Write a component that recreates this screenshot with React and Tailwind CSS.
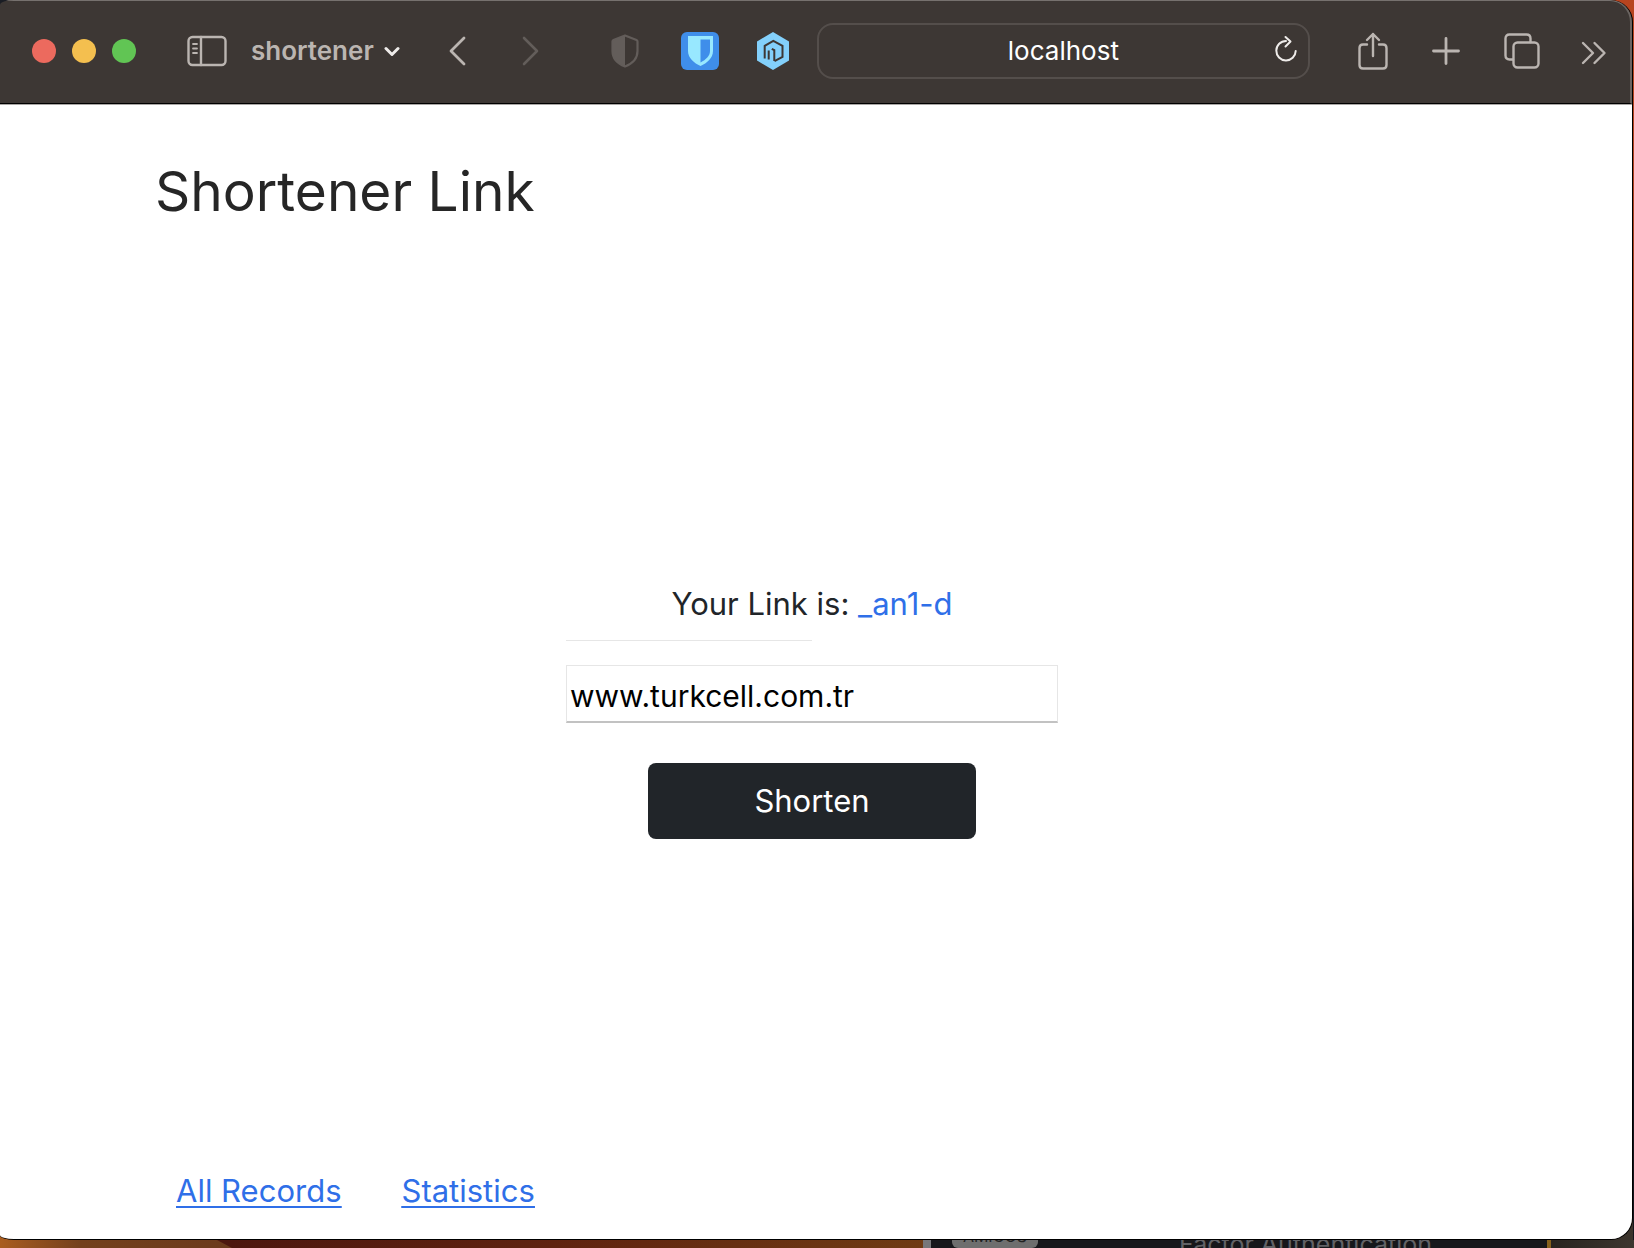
import React from "react";

const stroke = { fill: "none", stroke: "currentColor", strokeLinecap: "round", strokeLinejoin: "round" };

function IconButton({ label, className, children }) {
  return (
    <button type="button" aria-label={label} className={`flex shrink-0 items-center justify-center ${className}`}>
      {children}
    </button>
  );
}

function Toolbar() {
  return (
    <header className="flex h-[102px] items-center pb-[3px] pl-8 pr-[22px] text-[#bbb5b1]">
      <div className="flex shrink-0 gap-4">
        <button type="button" aria-label="Close" className="size-6 rounded-full bg-[#ec6a5e]" />
        <button type="button" aria-label="Minimize" className="size-6 rounded-full bg-[#f4bf4f]" />
        <button type="button" aria-label="Zoom" className="size-6 rounded-full bg-[#61c554]" />
      </div>

      <IconButton label="Show sidebar" className="ml-[51px]">
        <svg width="40" height="32" viewBox="0 0 40 32" {...stroke} strokeWidth="2.4">
          <rect x="1.5" y="2" width="37" height="28" rx="4" />
          <path d="M14 2v28" />
          <path d="M6 9h4M6 13.500h4M6 18h4" strokeWidth="1.800" />
        </svg>
      </IconButton>

      <button type="button" className="ml-6 flex shrink-0 items-center gap-2.5 text-[26px] font-semibold leading-8">
        shortener
        <svg width="16" height="12" viewBox="0 0 16 12" {...stroke} strokeWidth="3" className="text-[#efecea]">
          <path d="M2 3.500l6 6 6-6" />
        </svg>
      </button>

      <IconButton label="Back" className="ml-12">
        <svg width="20" height="32" viewBox="0 0 20 32" {...stroke} strokeWidth="2.800">
          <path d="M16 3L3 16l13 13" />
        </svg>
      </IconButton>
      <IconButton label="Forward" className="ml-[52px] text-[#635d5a]">
        <svg width="20" height="32" viewBox="0 0 20 32" {...stroke} strokeWidth="2.600">
          <path d="M4 3l13 13L4 29" />
        </svg>
      </IconButton>

      <IconButton label="Privacy report" className="ml-[71px] text-[#635d5a]">
        <svg width="28" height="34" viewBox="0 0 28 34" {...stroke} strokeWidth="2.200">
          <path d="M14 1.500L25.500 6q1 .4 1 1.500V17c0 8-6 13-12.500 15.500C7.500 30 1.500 25 1.500 17V7.500Q1.500 6.400 2.500 6z" />
          <path d="M14 1.500V32.500C7.500 30 1.500 25 1.500 17V7.500Q1.500 6.400 2.500 6z" fill="currentColor" stroke="none" />
        </svg>
      </IconButton>
      <IconButton label="Password manager" className="ml-[42px]">
        <svg width="38" height="38" viewBox="0 0 38 38">
          <rect width="38" height="38" rx="6" fill="#3f8eea" />
          <path d="M7 4h25v15c0 7-6 12-12.500 15C13 31 7 26 7 19z" fill="#98e8ff" />
          <path d="M19.500 7.500H29V19c0 5-4 8.500-9.500 11.500z" fill="#3f8eea" />
        </svg>
      </IconButton>
      <IconButton label="Package extension" className="ml-[38px]">
        <svg width="32" height="38" viewBox="0 0 32 38">
          <path d="M16 0l16 9.500v19L16 38 0 28.500v-19z" fill="#83d0fb" />
          <path d="M7.700 26.500V13.800L16.300 8.800l9.200 5V25l-8 4.200" fill="none" stroke="#3d3734" strokeWidth="2" />
          <path d="M11.700 27.500V18.500M14.800 16.800l2.500 1.400V29" fill="none" stroke="#3d3734" strokeWidth="2" />
        </svg>
      </IconButton>

      <div className="relative ml-7 min-w-0 flex-1">
        <input
          type="text"
          aria-label="Address"
          defaultValue="localhost"
          className="h-14 w-full rounded-2xl border-2 border-[#544e4b] bg-transparent px-12 text-center text-[26px] text-white outline-none"
        />
        <button type="button" aria-label="Reload" className="absolute right-3 top-3 text-[#efecea]">
          <svg width="24" height="30" viewBox="0 0 24 30" {...stroke} strokeWidth="2">
            <path d="M12 6A9.700 9.700 0 1 0 21.700 16" />
            <path d="M11.500 2l5 4.500-5 5" />
          </svg>
        </button>
      </div>

      <IconButton label="Share" className="ml-12">
        <svg width="30" height="38" viewBox="0 0 30 38" {...stroke} strokeWidth="2.400">
          <path d="M9 12.500H5Q1.500 12.500 1.500 16v17q0 3.500 3.500 3.500h20q3.500 0 3.500-3.500V16q0-3.500-3.500-3.500h-4" />
          <path d="M15 24V2M9 8l6-6 6 6" />
        </svg>
      </IconButton>
      <IconButton label="New tab" className="ml-11">
        <svg width="28" height="28" viewBox="0 0 28 28" {...stroke} strokeWidth="2.800">
          <path d="M14 1.500v25M1.500 14h25" />
        </svg>
      </IconButton>
      <IconButton label="Tab overview" className="ml-11">
        <svg width="36" height="36" viewBox="0 0 36 36" {...stroke} strokeWidth="2.400">
          <rect x="9.500" y="9.500" width="25" height="25" rx="4" />
          <path d="M9 26.500H5.500Q1.500 26.500 1.500 22.500V5.500q0-4 4-4h17q4 0 4 4V9" />
        </svg>
      </IconButton>
      <IconButton label="More" className="ml-10 pt-1">
        <svg width="28" height="24" viewBox="0 0 28 24" {...stroke} strokeWidth="2.400">
          <path d="M3 2l10 10L3 22M14.500 2l10 10-10 10" />
        </svg>
      </IconButton>
    </header>
  );
}

function Page() {
  return (
    <main className="flex flex-1 flex-col border-t border-[#aaa7a5] bg-white pr-2 text-[#212529]">
      <h1 className="ml-[155px] mt-12 text-[55px] leading-[76px] text-[#262626]">Shortener Link</h1>

      <form className="mx-auto mt-[351px] flex w-[492px] flex-col" onSubmit={(e) => e.preventDefault()}>
        <p className="text-center text-[31px] leading-12">
          Your Link is:{" "}
          <a href="#_an1-d" className="text-[#2f6fe8]">
            _an1-d
          </a>
        </p>
        <hr className="mt-3 w-1/2 border-[#e6e6e6]" />
        <input
          type="text"
          aria-label="Link to shorten"
          defaultValue="www.turkcell.com.tr"
          className="mt-6 h-[58px] border border-[#e6e6e6] border-b-2 border-b-[#c2c2c2] px-[3px] pt-1 text-[30px] text-black outline-none"
        />
        <button type="submit" className="mx-auto mt-10 h-[76px] w-2/3 rounded-lg bg-[#212529] text-[31px] text-white">
          Shorten
        </button>
      </form>

      <nav className="mb-6 ml-44 mt-auto flex gap-[60px] text-[31px] leading-12 text-[#2f6fe8] underline decoration-2 underline-offset-4">
        <a href="#records">All Records</a>
        <a href="#statistics">Statistics</a>
      </nav>
    </main>
  );
}

function DesktopStrip() {
  return (
    <div className="flex h-2 overflow-hidden">
      <div className="flex flex-1 bg-linear-to-r from-[#4d170f] from-25% via-[#5f2310] via-60% to-[#6f3b14]">
        <div className="w-[232px] shrink-0 bg-linear-to-r from-[#a95d20] via-[#73401c] via-35% to-[#6b3a1c] [clip-path:polygon(0_0,217px_0,100%_100%,0_100%)]" />
      </div>
      <div className="w-2 shrink-0 bg-[#77777a]" />
      <div className="flex w-[616px] shrink-0 items-start bg-[#17171b]">
        <span className="-mt-4 ml-[21px] h-6 w-[86px] rounded-md bg-[#6e6e6e] text-center text-[16px] leading-6 text-[#222222]">
          AMIGOS
        </span>
        <span className="-mt-2 ml-[141px] text-[25px] leading-6 text-[#626266]">Factor Authentication</span>
      </div>
      <div className="w-1 shrink-0 bg-[#86601c]" />
      <div className="w-[83px] shrink-0 bg-linear-to-r from-[#28231f] to-[#3d362f]" />
    </div>
  );
}

export default function App() {
  return (
    <div className="flex min-h-screen flex-col font-['Inter',sans-serif]">
      <div className="flex flex-1">
        <div className="flex min-w-0 flex-1 flex-col bg-[linear-gradient(#1a1d24,#a95d20),linear-gradient(#b8441f,#3a332c)] bg-[length:50%_100%,100%_100%] bg-no-repeat">
          <div className="flex flex-1 flex-col overflow-hidden rounded-br-[22px] rounded-bl-[14px_5px] rounded-tl-[14px_5px] rounded-tr-[22px] border-b border-r border-black bg-[#3d3734]">
            <div className="rounded-tr-[22px] border-b border-b-black border-r-2 border-r-[#6a6461] border-t border-t-[#76716e]">
              <Toolbar />
            </div>
            <Page />
          </div>
        </div>
        <div className="w-px bg-linear-to-b from-[#b8441f] from-5% via-[#6d2c1e] via-70% to-[#15151c] to-75%" />
      </div>
      <DesktopStrip />
    </div>
  );
}
